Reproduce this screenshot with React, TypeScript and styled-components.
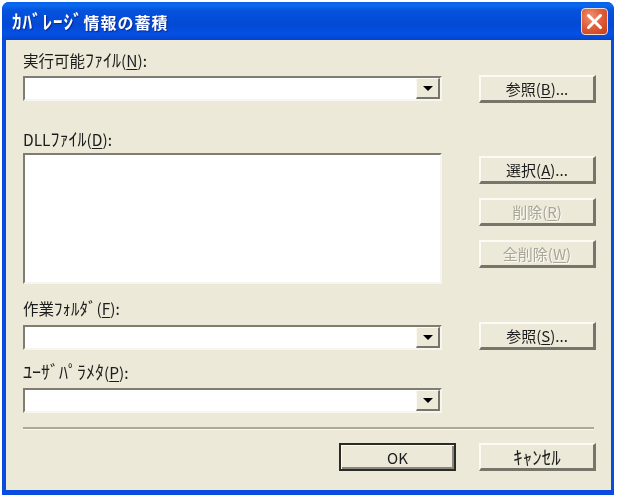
import React from "react";
import styled, { createGlobalStyle } from "styled-components";

const Global = createGlobalStyle`
  html, body { margin: 0; padding: 0; background: #fff; }
  body { width: 617px; height: 499px; overflow: hidden; font-family: "Noto Sans CJK JP", "Noto Sans", sans-serif; color: #1c1c1c; }
`;

const Page = styled.div`
  width: 617px;
  height: 499px;
  padding: 2px 3px 4px 2px;
  box-sizing: border-box;
`;

const Window = styled.div`
  width: 612px;
  height: 493px;
  display: flex;
  flex-direction: column;
  border-radius: 7px 7px 0 0;
  overflow: hidden;
  background: #0a4be0;
  filter: blur(0.35px);
`;

const TitleBar = styled.div`
  height: 38px;
  flex: none;
  display: flex;
  align-items: center;
  justify-content: space-between;
  padding: 0 6px 0 10px;
  background: linear-gradient(180deg, #0a5fe8 0%, #0a6af0 8%, #0453dd 22%, #0349d6 60%, #0550e4 85%, #0443c8 100%);
`;

const Title = styled.div`
  color: #fff;
  font-size: 16px;
  font-weight: 700;
  letter-spacing: 1px;
  text-shadow: 1px 1px 1px #0a2a90;
  white-space: nowrap;
  line-height: 20px;
`;

const CloseButton = styled.div`
  width: 27px;
  height: 27px;
  box-sizing: border-box;
  border: 1px solid #f3d8cc;
  border-radius: 4px;
  background: radial-gradient(circle at 35% 30%, #ee9272 0%, #e0603c 45%, #c63a18 100%);
  display: flex;
  align-items: center;
  justify-content: center;
`;

const Body = styled.div`
  flex: 1;
  margin: 0 3px 5px 4px;
  background: #ece9d8;
  padding: 10px 15px 0 17px;
  display: flex;
  flex-direction: column;
`;

const Columns = styled.div`
  display: flex;
  gap: 37px;
`;

const LeftColumn = styled.div`
  width: 419px;
  flex: none;
  display: flex;
  flex-direction: column;
`;

const RightColumn = styled.div`
  width: 117px;
  flex: none;
  display: flex;
  flex-direction: column;
  padding-top: 25px;
`;

const Label = styled.div<{ $top: number; $bottom: number }>`
  height: 20px;
  line-height: 20px;
  font-size: 15.5px;
  margin-top: ${(p) => p.$top}px;
  margin-bottom: ${(p) => p.$bottom}px;
  white-space: nowrap;
`;

const Kana = styled.span<{ $size: number }>`
  font-size: ${(p) => p.$size}px;
  line-height: 1;
`;

const Mnemonic = styled.span`
  text-decoration: underline;
  text-underline-offset: 2px;
`;

const Sunken = styled.div`
  box-sizing: border-box;
  background: #fff;
  border-style: solid;
  border-width: 2px;
  border-color: #7f7c72 #f6f5ef #f6f5ef #7f7c72;
`;

const Combo = styled(Sunken)`
  height: 25px;
  display: flex;
  justify-content: flex-end;
`;

const ListBox = styled(Sunken)`
  height: 131px;
`;

const DropButton = styled.div`
  width: 24px;
  box-sizing: border-box;
  background: #ece9d8;
  border-style: solid;
  border-width: 1px 2px 2px 1px;
  border-color: #fbfaf4 #77756a #77756a #fbfaf4;
  display: flex;
  align-items: center;
  justify-content: center;
`;

const Arrow = styled.div`
  width: 0;
  height: 0;
  border-left: 5px solid transparent;
  border-right: 5px solid transparent;
  border-top: 5px solid #000;
`;

const Button = styled.div<{ $top?: number; $disabled?: boolean; $default?: boolean }>`
  width: 117px;
  height: 28px;
  flex: none;
  box-sizing: border-box;
  margin-top: ${(p) => p.$top ?? 0}px;
  display: flex;
  align-items: center;
  justify-content: center;
  background: #ece9d8;
  font-size: 15px;
  white-space: pre;
  color: ${(p) => (p.$disabled ? "#a9a698" : "#1c1c1c")};
  text-shadow: ${(p) => (p.$disabled ? "1px 1px 0 #fbfaf4" : "none")};
  border-style: solid;
  border-width: ${(p) => (p.$default ? "2px" : "2px 3px 3px 2px")};
  border-color: ${(p) => (p.$default ? "#2a2a26" : "#fbfaf4 #77756a #77756a #fbfaf4")};
  box-shadow: ${(p) => (p.$default ? "inset 1px 1px 0 #fbfaf4, inset -2px -2px 0 #8a887c" : "none")};
`;

const Separator = styled.div`
  width: 571px;
  height: 2px;
  margin-top: 14px;
  background: #aca899;
  border-bottom: 1px solid #f8f7f1;
`;

const Footer = styled.div`
  display: flex;
  justify-content: flex-end;
  gap: 23px;
  margin-top: 13px;
`;

export default function App() {
  return (
    <Page>
      <Global />
      <Window>
        <TitleBar>
          <Title><Kana $size={19}>ｶﾊﾞﾚｰｼﾞ</Kana>情報の蓄積</Title>
          <CloseButton>
            <svg width="17" height="17" viewBox="0 0 17 17">
              <path d="M2.5 2.5 L14.5 14.5 M14.5 2.5 L2.5 14.5" stroke="#fff" strokeWidth="3" strokeLinecap="round" />
            </svg>
          </CloseButton>
        </TitleBar>
        <Body>
          <Columns>
            <LeftColumn>
              <Label $top={0} $bottom={6}>実行可能<Kana $size={18}>ﾌｧｲﾙ</Kana>(<Mnemonic>N</Mnemonic>):</Label>
              <Combo><DropButton><Arrow /></DropButton></Combo>
              <Label $top={28} $bottom={4}>DLL<Kana $size={18}>ﾌｧｲﾙ</Kana>(<Mnemonic>D</Mnemonic>):</Label>
              <ListBox />
              <Label $top={14} $bottom={7}>作業<Kana $size={17}>ﾌｫﾙﾀﾞ</Kana>(<Mnemonic>F</Mnemonic>):</Label>
              <Combo><DropButton><Arrow /></DropButton></Combo>
              <Label $top={12} $bottom={6}><Kana $size={18}>ﾕｰｻﾞﾊﾟﾗﾒﾀ</Kana>(<Mnemonic>P</Mnemonic>):</Label>
              <Combo><DropButton><Arrow /></DropButton></Combo>
            </LeftColumn>
            <RightColumn>
              <Button>参照(<Mnemonic>B</Mnemonic>)...</Button>
              <Button $top={53}>選択(<Mnemonic>A</Mnemonic>)...</Button>
              <Button $top={14} $disabled>削除(<Mnemonic>R</Mnemonic>)</Button>
              <Button $top={14} $disabled>全削除(<Mnemonic>W</Mnemonic>)</Button>
              <Button $top={54}>参照(<Mnemonic>S</Mnemonic>)...</Button>
            </RightColumn>
          </Columns>
          <Separator />
          <Footer>
            <Button $default>OK</Button>
            <Button><Kana $size={19}>ｷｬﾝｾﾙ</Kana></Button>
          </Footer>
        </Body>
      </Window>
    </Page>
  );
}
